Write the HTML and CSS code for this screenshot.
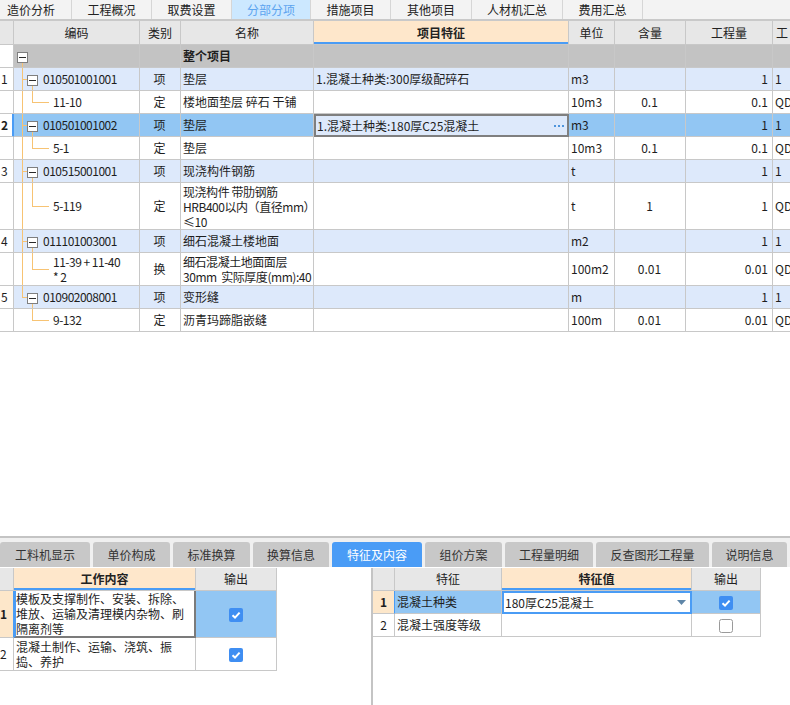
FILE: index.html
```html
<!DOCTYPE html>
<html lang="zh-CN">
<head>
<meta charset="utf-8">
<title>分部分项</title>
<link rel="stylesheet" href="styles.css">
</head>
<body>
<div class="app">
  <nav class="topbar">
    <span class="ttab first">造价分析</span>
    <span class="ttab">工程概况</span>
    <span class="ttab">取费设置</span>
    <span class="ttab active">分部分项</span>
    <span class="ttab">措施项目</span>
    <span class="ttab w81">其他项目</span>
    <span class="ttab w91">人材机汇总</span>
    <span class="ttab">费用汇总</span>
  </nav>

  <div class="main">
    <table class="grid">
      <thead>
        <tr class="hrow">
          <th class="w-num"></th>
          <th class="w-code">编码</th>
          <th class="w-type">类别</th>
          <th class="w-name">名称</th>
          <th class="w-feat active">项目特征</th>
          <th class="w-unit">单位</th>
          <th class="w-qty">含量</th>
          <th class="w-amt">工程量</th>
          <th class="w-last l">工</th>
        </tr>
      </thead>
      <tbody>
        <tr class="root r23">
          <td class="num"></td>
          <td class="code t-root"><span class="box"></span></td>
          <td></td>
          <td class="bold">整个项目</td>
          <td></td><td></td><td></td><td></td><td></td>
        </tr>
        <tr class="item r23">
          <td class="num">1</td>
          <td class="code t-item"><span class="box"></span>010501001001</td>
          <td class="c">项</td>
          <td>垫层</td>
          <td>1.混凝土种类:300厚级配碎石</td>
          <td>m3</td>
          <td></td>
          <td class="r">1</td>
          <td>1</td>
        </tr>
        <tr class="child r23">
          <td class="num"></td>
          <td class="code t-child">11-10</td>
          <td class="c">定</td>
          <td>楼地面垫层 碎石 干铺</td>
          <td></td>
          <td>10m3</td>
          <td class="c">0.1</td>
          <td class="r">0.1</td>
          <td>QDI</td>
        </tr>
        <tr class="item sel r23">
          <td class="num">2</td>
          <td class="code t-item"><span class="box"></span>010501001002</td>
          <td class="c">项</td>
          <td>垫层</td>
          <td class="edit"><div class="editbox"><span>1.混凝土种类:180厚C25混凝土</span><svg class="dots" width="10" height="2" viewBox="0 0 10 2"><rect x="0" y="0" width="2" height="2" fill="#4d94dc"/><rect x="4" y="0" width="2" height="2" fill="#4d94dc"/><rect x="8" y="0" width="2" height="2" fill="#4d94dc"/></svg></div></td>
          <td>m3</td>
          <td></td>
          <td class="r">1</td>
          <td>1</td>
        </tr>
        <tr class="child r23">
          <td class="num"></td>
          <td class="code t-child">5-1</td>
          <td class="c">定</td>
          <td>垫层</td>
          <td></td>
          <td>10m3</td>
          <td class="c">0.1</td>
          <td class="r">0.1</td>
          <td>QDI</td>
        </tr>
        <tr class="item r23">
          <td class="num">3</td>
          <td class="code t-item"><span class="box"></span>010515001001</td>
          <td class="c">项</td>
          <td>现浇构件钢筋</td>
          <td></td>
          <td>t</td>
          <td></td>
          <td class="r">1</td>
          <td>1</td>
        </tr>
        <tr class="child r47">
          <td class="num"></td>
          <td class="code t-child">5-119</td>
          <td class="c">定</td>
          <td class="multi tight">现浇构件 带肋钢筋<br>HRB400以内（直径mm）<br>≤10</td>
          <td></td>
          <td>t</td>
          <td class="c">1</td>
          <td class="r">1</td>
          <td>QDI</td>
        </tr>
        <tr class="item r23">
          <td class="num">4</td>
          <td class="code t-item"><span class="box"></span>011101003001</td>
          <td class="c">项</td>
          <td>细石混凝土楼地面</td>
          <td></td>
          <td>m2</td>
          <td></td>
          <td class="r">1</td>
          <td>1</td>
        </tr>
        <tr class="child r33">
          <td class="num"></td>
          <td class="code t-child multi">11-39 + 11-40<br>* 2</td>
          <td class="c">换</td>
          <td class="multi tight">细石混凝土地面面层<br>30mm&nbsp;&nbsp;实际厚度(mm):40</td>
          <td></td>
          <td>100m2</td>
          <td class="c">0.01</td>
          <td class="r">0.01</td>
          <td>QDI</td>
        </tr>
        <tr class="item r23">
          <td class="num">5</td>
          <td class="code t-item last"><span class="box"></span>010902008001</td>
          <td class="c">项</td>
          <td>变形缝</td>
          <td></td>
          <td>m</td>
          <td></td>
          <td class="r">1</td>
          <td>1</td>
        </tr>
        <tr class="child r23">
          <td class="num"></td>
          <td class="code t-child last">9-132</td>
          <td class="c">定</td>
          <td>沥青玛蹄脂嵌缝</td>
          <td></td>
          <td>100m</td>
          <td class="c">0.01</td>
          <td class="r">0.01</td>
          <td>QDI</td>
        </tr>
      </tbody>
    </table>
  </div>

  <div class="divider"></div>

  <div class="btabs">
    <span class="btab w90">工料机显示</span>
    <span class="btab w77">单价构成</span>
    <span class="btab w77">标准换算</span>
    <span class="btab w76">换算信息</span>
    <span class="btab w90 active">特征及内容</span>
    <span class="btab w77">组价方案</span>
    <span class="btab w88">工程量明细</span>
    <span class="btab w113">反查图形工程量</span>
    <span class="btab w75">说明信息</span>
  </div>

  <div class="panels">
    <div class="pleft">
      <table class="sub left-sub">
        <thead>
          <tr class="hrow">
            <th class="lw-num"></th>
            <th class="lw-text active">工作内容</th>
            <th class="lw-out">输出</th>
          </tr>
        </thead>
        <tbody>
          <tr class="r47">
            <td class="snum cur">1</td>
            <td class="wedit multi">模板及支撑制作、安装、拆除、<br>堆放、运输及清理模内杂物、刷<br>隔离剂等</td>
            <td class="c selbg"><svg class="chk" width="14" height="14" viewBox="0 0 14 14"><rect width="14" height="14" rx="2" fill="#3f8ef2"/><path d="M3.5 7.3 L6 9.6 L10.6 4.6" fill="none" stroke="#fff" stroke-width="2"/></svg></td>
          </tr>
          <tr class="r33">
            <td class="snum">2</td>
            <td class="wtext multi">混凝土制作、运输、浇筑、振<br>捣、养护</td>
            <td class="c"><svg class="chk" width="14" height="14" viewBox="0 0 14 14"><rect width="14" height="14" rx="2" fill="#3f8ef2"/><path d="M3.5 7.3 L6 9.6 L10.6 4.6" fill="none" stroke="#fff" stroke-width="2"/></svg></td>
          </tr>
        </tbody>
      </table>
    </div>
    <div class="psep"></div>
    <div class="pright">
      <table class="sub right-sub">
        <thead>
          <tr class="hrow">
            <th class="rw-num"></th>
            <th class="rw-feat">特征</th>
            <th class="rw-val active">特征值</th>
            <th class="rw-out">输出</th>
          </tr>
        </thead>
        <tbody>
          <tr class="r23">
            <td class="snum cur c">1</td>
            <td class="selbg ftext">混凝土种类</td>
            <td class="vedit"><div class="editbox"><span>180厚C25混凝土</span><svg class="tri" width="9" height="5" viewBox="0 0 9 5"><polygon points="0,0 9,0 4.5,5" fill="#5f86a8"/></svg></div></td>
            <td class="c selbg"><svg class="chk" width="14" height="14" viewBox="0 0 14 14"><rect width="14" height="14" rx="2" fill="#3f8ef2"/><path d="M3.5 7.3 L6 9.6 L10.6 4.6" fill="none" stroke="#fff" stroke-width="2"/></svg></td>
          </tr>
          <tr class="r23">
            <td class="snum c">2</td>
            <td class="ftext">混凝土强度等级</td>
            <td></td>
            <td class="c"><svg class="chk" width="14" height="14" viewBox="0 0 14 14"><rect x="0.5" y="0.5" width="13" height="13" rx="2" fill="#fff" stroke="#9a9a9a"/></svg></td>
          </tr>
        </tbody>
      </table>
    </div>
  </div>
</div>
</body>
</html>
```

FILE: styles.css
```css
* { box-sizing: border-box; }

html, body {
  margin: 0;
  padding: 0;
}

body {
  width: 790px;
  height: 705px;
  overflow: hidden;
  background: #fff;
  font-family: "Noto Sans CJK SC", "Microsoft YaHei", sans-serif;
  font-size: 12px;
  color: #1e1e1e;
}

.app {
  display: flex;
  flex-direction: column;
  height: 705px;
}

/* ---------- top tabs ---------- */
.topbar {
  display: flex;
  flex: none;
  height: 21px;
  background: #f3f3f3;
  border-bottom: 2px solid #c9c9c9;
}

.ttab {
  width: 80px;
  text-align: center;
  line-height: 19px;
  border-right: 1px solid #d6d6d6;
  white-space: nowrap;
  color: #222;
}

.ttab.first { width: 72px; text-align: left; padding-left: 7px; }
.ttab.active { width: 79px; background: #cce8ff; color: #5ca4ef; }
.ttab.w81 { width: 81px; }
.ttab.w91 { width: 91px; }

/* ---------- main grid ---------- */
.main {
  flex: none;
  height: 515px;
  overflow: hidden;
}

table {
  border-collapse: separate;
  border-spacing: 0;
  table-layout: fixed;
}

.grid { width: 833px; }

.grid th,
.grid td,
.sub th,
.sub td {
  border-right: 1px solid #c8c8c8;
  border-bottom: 1px solid #c8c8c8;
  padding: 0 3px;
  line-height: 14px;
  white-space: nowrap;
  overflow: hidden;
  vertical-align: middle;
  text-align: left;
}

.grid td.multi,
.sub td.multi {
  line-height: 15px;
}

.grid th,
.sub th {
  background: #e7e7e7;
  font-weight: normal;
  text-align: center;
  color: #222;
}

.grid th.l { text-align: left; }

th.active {
  background: #fee7cb;
  font-weight: bold;
  box-shadow: inset 0 -2px 0 #4a9cf5;
}

.hrow { height: 24px; }
.sub .hrow { height: 23px; }
.r23 { height: 23px; }
.r33 { height: 33px; }
.r47 { height: 47px; }

.w-num { width: 14px; }
.w-code { width: 126px; }
.w-type { width: 41px; }
.w-name { width: 133px; }
.w-feat { width: 255px; }
.w-unit { width: 46px; }
.w-qty { width: 71px; }
.w-amt { width: 87px; }
.w-last { width: 60px; }

.grid td.num {
  padding: 0 0 0 1px;
  background-color: #fff;
}

.c { text-align: center !important; }
.r { text-align: right !important; padding-right: 4px !important; }
.bold { font-weight: bold; }
.tight { letter-spacing: -0.45px; }

.grid td { padding-left: 2px; }

.root td { background-color: #c3c3c3; }
.item td { background-color: #dde9fb; }
.sel td { background-color: #92c6f3; }
.grid tr td.num { background-color: #fff; }

.sel td.num {
  background-color: #fde7ca;
  font-weight: bold;
  border-right-color: #4a9cf5;
  box-shadow: inset -1px 0 0 #4a9cf5;
}

.grid td.edit {
  border: 2px solid #7f7f7f;
  background-color: #dde9fb;
  padding: 0 3px 0 1px;
}

.editbox {
  display: flex;
  align-items: center;
  justify-content: space-between;
}

.dots { display: block; }

/* tree column */
.grid td.code {
  padding-right: 0;
  background-repeat: no-repeat;
  letter-spacing: -0.5px;
}

.box {
  display: inline-block;
  width: 11px;
  height: 11px;
  border: 1px solid #7f7f7f;
  background: #fff linear-gradient(#2a2a2a, #2a2a2a) no-repeat center / 7px 1px;
  vertical-align: -2px;
}

.t-root { padding-left: 3px !important; }
.t-root {
  background-image: linear-gradient(#f7c373, #f7c373);
  background-position: 8px 100%;
  background-size: 1px 50%;
}

.t-item { padding-left: 13px !important; }
.t-item .box { margin-right: 5px; }
.t-item {
  background-image:
    linear-gradient(#f7c373, #f7c373),
    linear-gradient(#f7c373, #f7c373),
    linear-gradient(#f7c373, #f7c373);
  background-position: 8px 0, 8px 50%, 18px 100%;
  background-size: 1px 100%, 5px 1px, 1px 50%;
}

.t-item.last {
  background-size: 1px 50%, 5px 1px, 1px 50%;
}

.t-child { padding-left: 39px !important; }
.t-child {
  background-image:
    linear-gradient(#f7c373, #f7c373),
    linear-gradient(#f7c373, #f7c373),
    linear-gradient(#f7c373, #f7c373);
  background-position: 8px 0, 18px 0, 18px 50%;
  background-size: 1px 100%, 1px 50%, 17px 1px;
}

.t-child.last {
  background-size: 0 0, 1px 50%, 17px 1px;
}

/* ---------- bottom tabs ---------- */
.divider {
  flex: none;
  height: 2px;
  background: #c4c4c4;
}

.btabs {
  flex: none;
  display: flex;
  align-items: flex-end;
  gap: 3px;
  height: 29px;
  background: #f0f0f0;
}

.btab {
  height: 25px;
  line-height: 25px;
  text-align: center;
  background: #c8c8c8;
  border-radius: 3px 3px 0 0;
  color: #333;
  white-space: nowrap;
}

.btab.active { background: #4a9cf6; color: #fff; }
.w75 { width: 75px; }
.w76 { width: 76px; }
.w77 { width: 77px; }
.w88 { width: 88px; }
.w90 { width: 90px; }
.w113 { width: 113px; }

/* ---------- bottom panels ---------- */
.panels {
  flex: 1;
  display: flex;
  padding-top: 1px;
  background: #fff;
  min-height: 0;
}

.pleft { width: 371px; flex: none; }
.psep { width: 2px; flex: none; background: #c4c4c4; }
.pright { flex: 1; }

.left-sub { width: 277px; }
.lw-num { width: 14px; }
.lw-text { width: 182px; }
.lw-out { width: 81px; }

.right-sub { width: 388px; }
.rw-num { width: 22px; }
.rw-feat { width: 107px; }
.rw-val { width: 190px; }
.rw-out { width: 69px; }

.sub td.snum { padding: 0; background: #fff; }
.sub td.snum.cur {
  background: #fde7ca;
  font-weight: bold;
  border-right-color: #4a9cf5;
}

.sub td.selbg { background: #92c6f3; }

.sub td.wedit {
  background: #fff;
  border: 2px solid #7b7b7b;
  border-top: none;
  border-left: 2px solid #4a9cf5;
  padding: 0;
}

.sub td.wtext { padding: 0 0 0 2px; }
.sub td.ftext { padding-left: 2px; }

.sub td.vedit {
  background: #fff;
  border: 2px solid #4a9cf5;
  padding: 0 4px 0 1px;
}

.chk { display: inline-block; vertical-align: middle; }
.tri { display: block; }
```
